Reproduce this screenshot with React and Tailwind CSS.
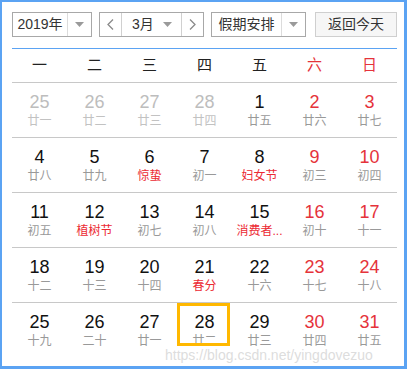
const WEEK = ['一', '二', '三', '四', '五', '六', '日'];

const ROWS = [
  [['25', '廿一', 'prev'], ['26', '廿二', 'prev'], ['27', '廿三', 'prev'], ['28', '廿四', 'prev'], ['1', '廿五'], ['2', '廿六'], ['3', '廿七']],
  [['4', '廿八'], ['5', '廿九'], ['6', '惊蛰', 'fest'], ['7', '初一'], ['8', '妇女节', 'fest'], ['9', '初三'], ['10', '初四']],
  [['11', '初五'], ['12', '植树节', 'fest'], ['13', '初七'], ['14', '初八'], ['15', '消费者...', 'fest'], ['16', '初十'], ['17', '十一']],
  [['18', '十二'], ['19', '十三'], ['20', '十四'], ['21', '春分', 'fest'], ['22', '十六'], ['23', '十七'], ['24', '十八']],
  [['25', '十九'], ['26', '二十'], ['27', '廿一'], ['28', '廿二', 'today'], ['29', '廿三'], ['30', '廿四'], ['31', '廿五']],
];

function Caret() {
  return (
    <svg width="9" height="5" viewBox="0 0 9 5">
      <path d="M0 0 L9 0 L4.5 5 Z" fill="#9a9a9a" />
    </svg>
  );
}

function Chevron({ dir }) {
  return (
    <svg width="7" height="11" viewBox="0 0 7 11">
      <polyline
        points={dir === 'left' ? '6,0.5 1,5.5 6,10.5' : '1,0.5 6,5.5 1,10.5'}
        fill="none"
        stroke="#8a8a8a"
        strokeWidth="1.3"
      />
    </svg>
  );
}

function Cell({ day, lunar, kind, col }) {
  const weekend = col >= 5;
  let numColor = 'text-[#111]';
  if (kind === 'prev') numColor = 'text-[#bdbdbd]';
  else if (weekend) numColor = 'text-[#e5333b]';
  let lunarColor = 'text-[#999]';
  if (kind === 'prev') lunarColor = 'text-[#c2c2c2]';
  else if (kind === 'fest') lunarColor = 'text-[#ec2a33]';
  return (
    <div className="relative flex flex-col items-center pt-[9px]">
      <span className={`text-[18px] leading-[20px] ${numColor}`}>{day}</span>
      <span className={`mt-[2px] text-[12px] leading-[14px] whitespace-nowrap ${lunarColor}`}>{lunar}</span>
      {kind === 'today' && (
        <div className="absolute left-0 top-0 w-[53px] h-[43px] border-[3px] border-[#ffb800]" />
      )}
    </div>
  );
}

export default function App() {
  return (
    <div
      className="w-[410px] h-[370px] bg-white"
      style={{ fontFamily: '"Liberation Sans", "Noto Sans CJK SC", sans-serif' }}
    >
      <div className="relative w-[407px] h-[369px] border-2 border-r-[3px] border-b-[3px] border-[#5ba3f3] pl-[10px] pt-[10px]">
        <div className="flex items-center h-[25px] text-[14px] text-[#333]">
          <div className="flex h-full w-[80px] border border-[#a8a8a8] bg-white">
            <div className="flex-1 flex items-center justify-center">2019年</div>
            <div className="w-[24px] flex items-center justify-center border-l border-[#dcdcdc]">
              <Caret />
            </div>
          </div>
          <div className="ml-[7px] flex h-full w-[105px] border border-[#a8a8a8] bg-white">
            <div className="w-[22px] flex items-center justify-center border-r border-[#d0d0d0]">
              <Chevron dir="left" />
            </div>
            <div className="flex-1 flex items-center justify-between pl-[10px] pr-[9px]">
              <span>3月</span>
              <Caret />
            </div>
            <div className="w-[22px] flex items-center justify-center border-l border-[#d0d0d0]">
              <Chevron dir="right" />
            </div>
          </div>
          <div className="ml-[7px] flex h-full w-[95px] border border-[#a8a8a8] bg-white">
            <div className="flex-1 flex items-center justify-center">假期安排</div>
            <div className="w-[24px] flex items-center justify-center border-l border-[#dcdcdc]">
              <Caret />
            </div>
          </div>
          <div className="ml-[9px] flex h-full w-[82px] items-center justify-center border border-[#cfcfcf] bg-[#f6f6f6]">
            返回今天
          </div>
        </div>

        <div className="mt-[11px] w-[385px] border-t border-[#5ba3f3]">
          <div className="grid grid-cols-7 h-[33px] items-center text-[15px]">
            {WEEK.map((w, i) => (
              <div key={w} className={`text-center ${i >= 5 ? 'text-[#e5333b]' : 'text-[#222]'}`}>{w}</div>
            ))}
          </div>
          {ROWS.map((row, r) => (
            <div key={r} className="grid grid-cols-7 h-[55px] border-t border-[#c8c8c8]">
              {row.map(([day, lunar, kind], c) => (
                <Cell key={c} day={day} lunar={lunar} kind={kind} col={c} />
              ))}
            </div>
          ))}
        </div>

        <div className="absolute left-[163px] top-[343px] text-[14px] text-[#d4d4d4]/80 whitespace-nowrap pointer-events-none">
          https://blog.csdn.net/yingdovezuo
        </div>
      </div>
    </div>
  );
}
